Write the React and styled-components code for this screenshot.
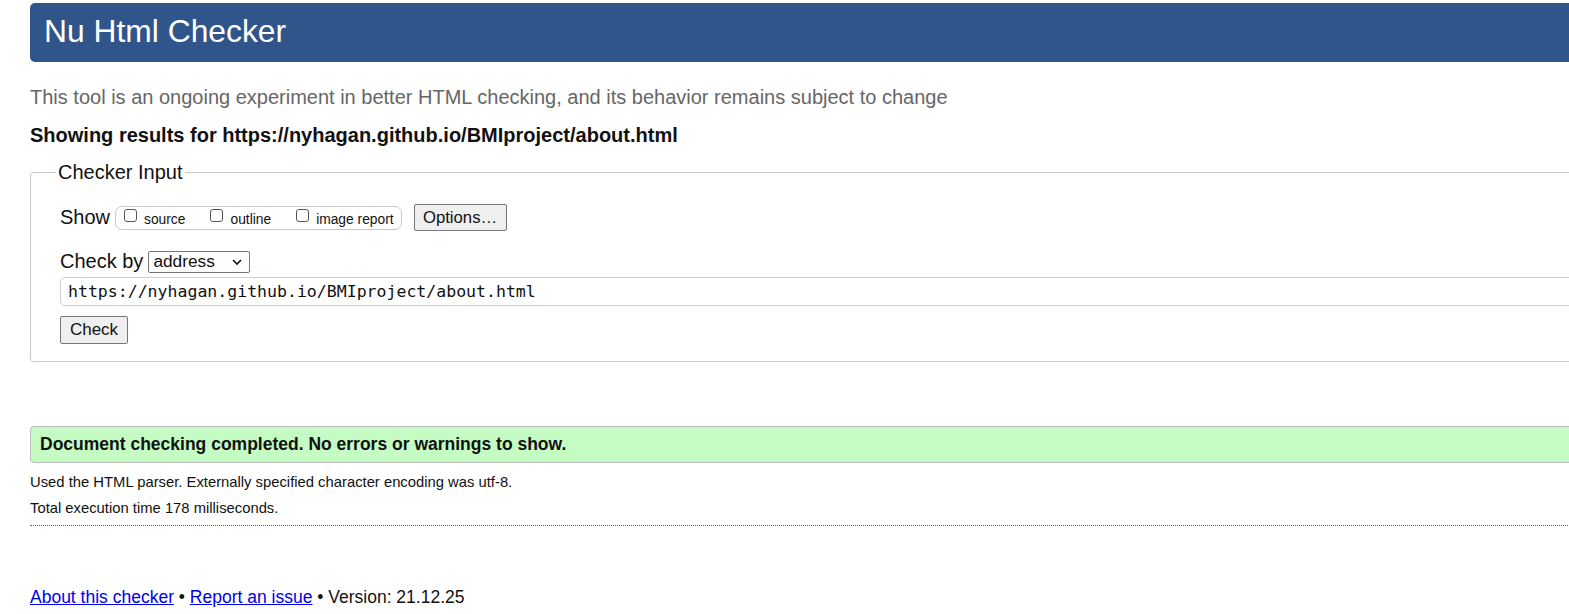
import React from "react";
import styled, { createGlobalStyle } from "styled-components";

const Global = createGlobalStyle`
  html, body { margin: 0; padding: 0; background: #fff; overflow: hidden; }
  body { font-family: "Liberation Sans", Arial, sans-serif; color: #111; }
`;

const Page = styled.div`
  width: 1640px;
  padding: 3px 0 0 30px;
`;

const Header = styled.h1`
  margin: 0;
  height: 59px;
  box-sizing: border-box;
  background: #30558b;
  border-radius: 5px;
  color: #fff;
  font-weight: normal;
  font-size: 31.8px;
  display: flex;
  align-items: center;
  padding: 0 0 2px 14px;
`;

const Intro = styled.p`
  margin: 23px 0 0;
  font-size: 20px;
  line-height: 24px;
  color: #666;
`;

const Results = styled.h2`
  margin: 14px 0 0;
  font-size: 20px;
  line-height: 24px;
  font-weight: bold;
  color: #111;
`;

const Fieldset = styled.fieldset`
  margin: 14px 0 0;
  border: 1px solid #c8c8c8;
  border-radius: 4px;
  padding: 10px 29px 19px 29px;
  height: 201px;
  box-sizing: border-box;
`;

const Legend = styled.legend`
  font-size: 20px;
  padding: 0 2px;
  margin-left: -4px;
  color: #111;
`;

const Row = styled.div`
  display: flex;
  align-items: center;
  margin-top: ${(p) => p.$mt || 0}px;
`;

const Label = styled.span`
  font-size: 20px;
  color: #111;
  margin-right: 5px;
`;

const Group = styled.div`
  display: flex;
  align-items: center;
  border: 1px solid #c8c8c8;
  border-radius: 7px;
  height: 24px;
  box-sizing: border-box;
  padding: 0 7px 0 8px;
  gap: 25px;
`;

const CheckLabel = styled.label`
  display: flex;
  align-items: center;
  font-size: 13.8px;
  color: #111;
  padding-top: 3px;
`;

const Box = styled.span`
  width: 13px;
  height: 13px;
  border: 1px solid #555;
  border-radius: 3px;
  margin-right: 7px;
  margin-top: -7px;
  box-sizing: border-box;
`;

const Button = styled.button`
  font-family: "Liberation Sans", Arial, sans-serif;
  font-size: ${(p) => p.$fs || 17}px;
  color: #111;
  background: #efefef;
  border: 1px solid #767676;
  border-radius: 2px;
  height: ${(p) => p.$h || 27}px;
  width: ${(p) => p.$w}px;
  padding: 0;
  margin-left: ${(p) => p.$ml || 0}px;
`;

const Select = styled.div`
  display: flex;
  align-items: center;
  justify-content: space-between;
  width: 102px;
  height: 22px;
  box-sizing: border-box;
  border: 1px solid #767676;
  border-radius: 2px;
  padding: 0 6px 0 4px;
  font-size: 17.3px;
  color: #111;
`;

const Url = styled.div`
  margin-top: 4px;
  height: 29px;
  box-sizing: border-box;
  border: 1px solid #d0d0d0;
  border-radius: 5px;
  display: flex;
  align-items: center;
  padding: 0 7px;
  font-family: "DejaVu Sans Mono", monospace;
  font-size: 16.55px;
  color: #111;
`;

const Success = styled.div`
  margin-top: 64px;
  height: 37px;
  box-sizing: border-box;
  background: #c4fcc4;
  border: 1px solid #bbb;
  border-radius: 4px;
  display: flex;
  align-items: center;
  padding-left: 9px;
  font-weight: bold;
  font-size: 17.5px;
  color: #111;
`;

const Note = styled.p`
  margin: ${(p) => p.$mt || 0}px 0 0;
  font-size: 14.8px;
  line-height: 17px;
  color: #111;
`;

const Rule = styled.hr`
  margin: 8px 0 0;
  border: 0;
  border-top: 1px dotted #666;
  height: 0;
`;

const Footer = styled.p`
  margin: 61px 0 0;
  font-size: 17.5px;
  line-height: 20px;
  color: #111;
  a { color: #0000ee; text-decoration: underline; }
`;

export default function App() {
  return (
    <>
      <Global />
      <Page>
        <Header>Nu Html Checker</Header>
        <Intro>This tool is an ongoing experiment in better HTML checking, and its behavior remains subject to change</Intro>
        <Results>Showing results for https://nyhagan.github.io/BMIproject/about.html</Results>
        <Fieldset>
          <Legend>Checker Input</Legend>
          <Row $mt={10}>
            <Label>Show</Label>
            <Group>
              <CheckLabel><Box />source</CheckLabel>
              <CheckLabel><Box />outline</CheckLabel>
              <CheckLabel><Box />image report</CheckLabel>
            </Group>
            <Button $ml={12} $h={27} $w={93} $fs={16.7}>Options…</Button>
          </Row>
          <Row $mt={19}>
            <Label>Check by</Label>
            <Select>
              <span>address</span>
              <svg width="12" height="8" viewBox="0 0 12 8">
                <path d="M2 2 L6 6 L10 2" fill="none" stroke="#111" strokeWidth="1.6" />
              </svg>
            </Select>
          </Row>
          <Url>https://nyhagan.github.io/BMIproject/about.html</Url>
          <Row $mt={10}>
            <Button $h={28} $w={68} $fs={17}>Check</Button>
          </Row>
        </Fieldset>
        <Success>Document checking completed. No errors or warnings to show.</Success>
        <Note $mt={11}>Used the HTML parser. Externally specified character encoding was utf-8.</Note>
        <Note $mt={9}>Total execution time 178 milliseconds.</Note>
        <Rule />
        <Footer>
          <a href="#">About this checker</a> • <a href="#">Report an issue</a> • Version: 21.12.25
        </Footer>
      </Page>
    </>
  );
}
